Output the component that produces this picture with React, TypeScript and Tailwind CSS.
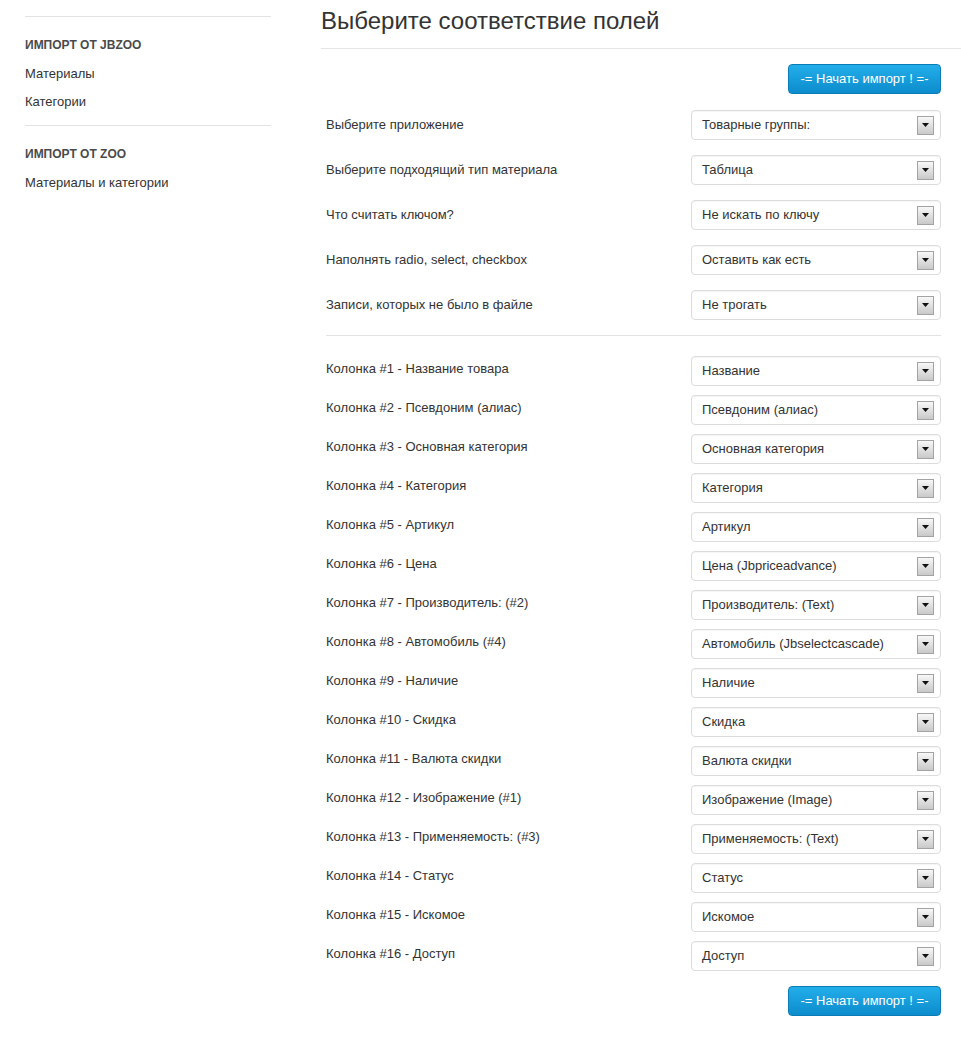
import React from 'react';

const font = { fontFamily: '"Liberation Sans", Arial, sans-serif' };

const topRows: [string, string][] = [
  ['Выберите приложение', 'Товарные группы:'],
  ['Выберите подходящий тип материала', 'Таблица'],
  ['Что считать ключом?', 'Не искать по ключу'],
  ['Наполнять radio, select, checkbox', 'Оставить как есть'],
  ['Записи, которых не было в файле', 'Не трогать'],
];

const columns: [string, string][] = [
  ['Название товара', 'Название'],
  ['Псевдоним (алиас)', 'Псевдоним (алиас)'],
  ['Основная категория', 'Основная категория'],
  ['Категория', 'Категория'],
  ['Артикул', 'Артикул'],
  ['Цена', 'Цена (Jbpriceadvance)'],
  ['Производитель: (#2)', 'Производитель: (Text)'],
  ['Автомобиль (#4)', 'Автомобиль (Jbselectcascade)'],
  ['Наличие', 'Наличие'],
  ['Скидка', 'Скидка'],
  ['Валюта скидки', 'Валюта скидки'],
  ['Изображение (#1)', 'Изображение (Image)'],
  ['Применяемость: (#3)', 'Применяемость: (Text)'],
  ['Статус', 'Статус'],
  ['Искомое', 'Искомое'],
  ['Доступ', 'Доступ'],
];

// стрелка как у старого виндового select
const Arrow = () => (
  <span className="flex h-[19px] w-[17px] items-center justify-center border border-[#a3a3a3] bg-gradient-to-b from-[#f8f8f8] to-[#c9c9c9]">
    <svg width="7" height="4" viewBox="0 0 7 4">
      <path d="M0 0h7L3.5 4z" fill="#111" />
    </svg>
  </span>
);

const Select = ({ value }: { value: string }) => (
  <div className="flex h-[30px] w-[250px] shrink-0 items-center justify-between rounded-[4px] border border-[#dcdcdc] bg-white pl-[10px] pr-[6px] text-[13px] text-[#333] shadow-[inset_0_1px_1px_rgba(0,0,0,0.04)]">
    <span>{value}</span>
    <Arrow />
  </div>
);

const Button = () => (
  <button className="h-[30px] w-[153px] rounded-[4px] border border-[#0b7cb5] bg-gradient-to-b from-[#22aeea] to-[#0c8ccc] text-[13px] text-white">
    -= Начать импорт ! =-
  </button>
);

export default function App() {
  return (
    <div className="flex min-h-[1039px] bg-white text-[#333]" style={font}>
      <aside className="ml-[25px] w-[246px] shrink-0 pt-[16px] leading-[18px]">
        <div className="border-t border-[#e2e2e2]" />
        <div className="pt-[19px] text-[12px] font-bold uppercase text-[#4a4a4a]">Импорт от JBZOO</div>
        <div className="mt-[11px] text-[13px]">Материалы</div>
        <div className="mt-[10px] text-[13px]">Категории</div>
        <div className="mt-[14px] border-t border-[#e2e2e2]" />
        <div className="pt-[19px] text-[12px] font-bold uppercase text-[#4a4a4a]">Импорт от ZOO</div>
        <div className="mt-[11px] text-[13px]">Материалы и категории</div>
      </aside>

      <main className="ml-[50px] flex-1">
        <h1 className="h-[49px] pt-[7px] text-[24px] leading-[28px] text-[#333] border-b border-[#e5e5e5]">
          Выберите соответствие полей
        </h1>
        <div className="pl-[5px] pr-[20px]">
          <div className="flex justify-end pt-[15px]">
            <Button />
          </div>

          <div className="flex flex-col gap-[15px] pt-[16px]">
            {topRows.map(([label, value]) => (
              <div key={label} className="flex items-center justify-between text-[13px]">
                <span>{label}</span>
                <Select value={value} />
              </div>
            ))}
          </div>

          <div className="mt-[15px] border-t border-[#e2e2e2]" />

          <div className="flex flex-col gap-[9px] pt-[20px]">
            {columns.map(([label, value], i) => (
              <div key={label} className="flex items-center justify-between text-[13px]">
                <span className="-mt-[4px]">Колонка #{i + 1} - {label}</span>
                <Select value={value} />
              </div>
            ))}
          </div>

          <div className="flex justify-end pt-[15px]">
            <Button />
          </div>
        </div>
      </main>
    </div>
  );
}
